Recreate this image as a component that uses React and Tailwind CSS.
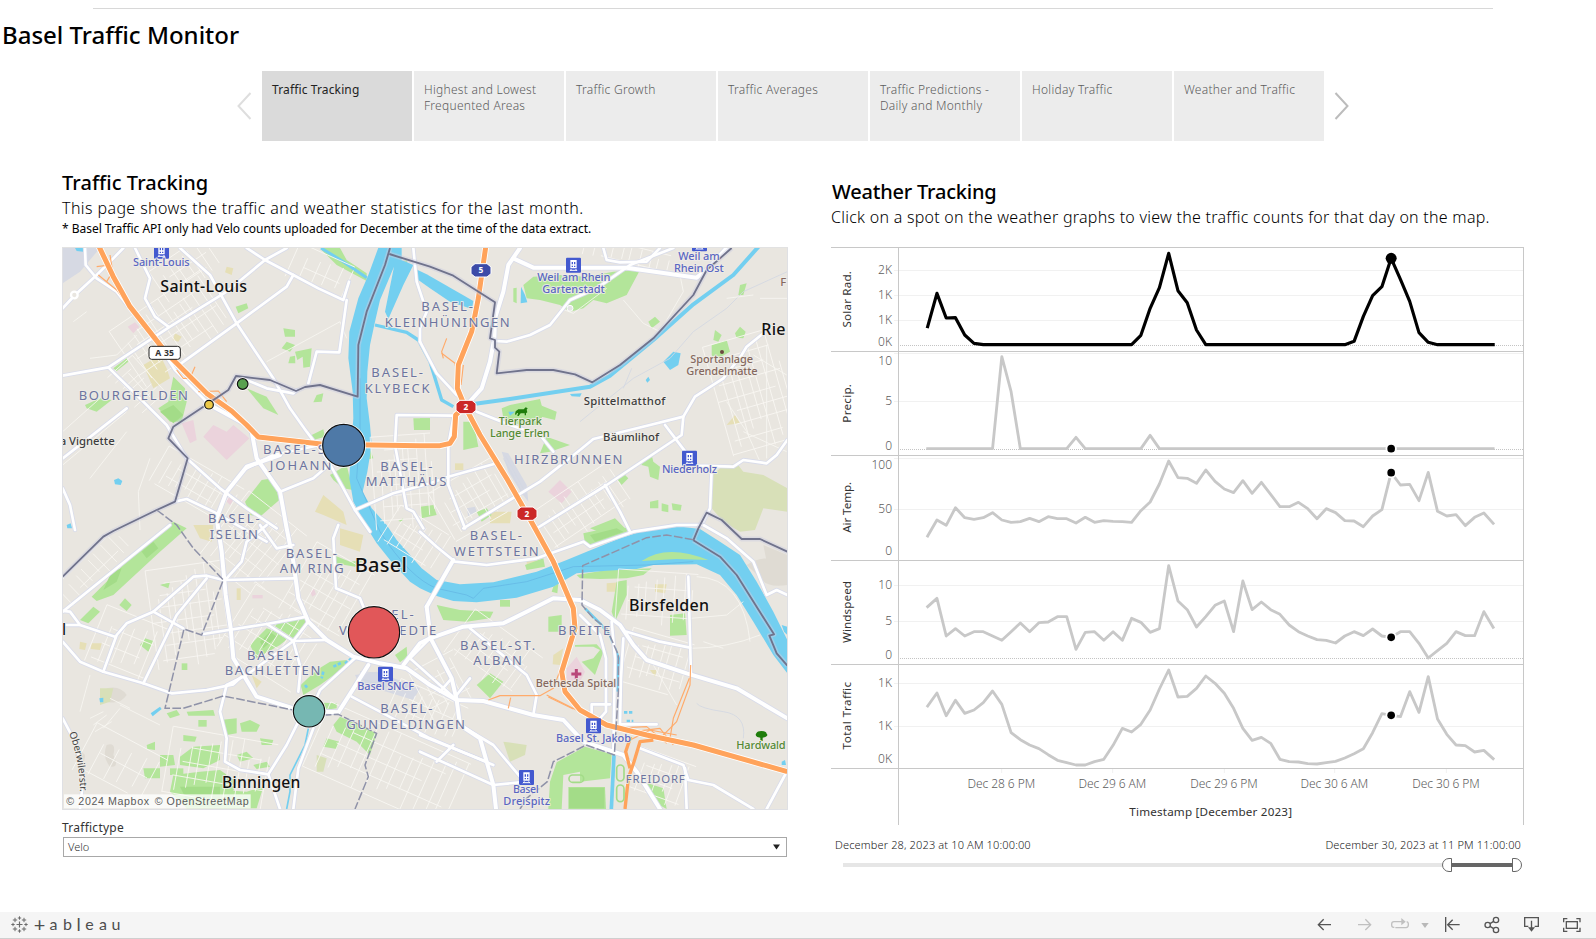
import React from "react";

const TABS = [
  "Traffic Tracking",
  "Highest and Lowest Frequented Areas",
  "Traffic Growth",
  "Traffic Averages",
  "Traffic Predictions - Daily and Monthly",
  "Holiday Traffic",
  "Weather and Traffic",
];

/* ---------- map data (units: a third of a pixel) ---------- */

const MAJOR = [
  "8 190 45 150 110 90 160 40 190 9",
  "75 9 77 60 110 100 170 140 240 230 290 290 345 375 450 480",
  "225 9 270 100 255 160 285 215 325 245",
  "8 392 145 367 330 245 500 140 615 45 680 9",
  "145 367 240 460 320 540 380 640 480 730 560 790 650 850",
  "360 9 450 90 530 235 640 400 690 490 740 560 800 640 850 730 885 795 930 860",
  "560 9 615 45 700 90 775 130 850 165 867 110",
  "860 165 838 322 770 320 745 415",
  "700 90 680 125 530 235 350 365",
  "8 640 200 490",
  "548 400 620 430 700 445 710 436",
  "8 730 30 780 45 855",
  "345 770 380 762 460 800 620 890",
  "885 795 1000 745 1110 715 1165 695",
  "1180 512 1010 510 1005 600 1040 790 1060 800 1090 850",
  "560 670 640 630 780 600",
  "660 740 760 700 830 640",
  "8 1100 330 840",
  "8 1190 60 1250 130 1280 250 1315 335 1345 440 1335 520 1318 550 1290",
  "130 1280 170 1170 200 1135 280 1100 400 995 440 992 490 1005 700 1000",
  "440 1000 350 1110 250 1315",
  "8 1098 30 1100 60 1140 165 1175",
  "8 1140 60 1140",
  "280 1100 370 1150",
  "430 1167 620 1137 740 1115",
  "620 1137 700 1188 800 1185",
  "700 1188 745 1130",
  "700 1188 722 1270 715 1340",
  "500 1320 560 1290 700 1188",
  "500 1320 480 1400 500 1480 495 1550 540 1575 625 1588 680 1500 715 1430",
  "625 1588 660 1692",
  "700 1692 715 1570 760 1450",
  "885 1240 780 1335 760 1380",
  "875 1355 960 1400 1110 1480 1300 1560",
  "835 840 820 880 828 1030 900 1060 912 1090",
  "500 1000 545 950 560 890 620 840",
  "600 840 650 910 700 900",
  "8 1420 50 1500 70 1600 60 1692",
  "1305 288 1340 290 1410 270 1470 240 1530 165 1610 130 1710 60 1840 9",
  "1630 9 1640 45 1680 52 1760 50 1800 9",
  "1080 290 1130 385 1190 450",
  "1060 9 1070 110 1100 200 1080 250 1080 290",
  "1250 500 1350 540 1440 570 1480 620",
  "1210 850 1440 710 1560 615 1600 582 1770 540 1870 515 1905 455 1990 400 2045 330 2060 305 2110 265",
  "1430 850 1640 720 1865 570 1870 515",
  "1815 540 1880 625 1910 662 2020 665 2050 645 2120 655 2150 630 2182 585",
  "1955 670 1950 790 1930 830",
  "1635 720 1680 800 1710 860",
  "1180 520 1165 600 1165 720 1215 850",
  "1165 695 1310 655",
  "1080 860 1130 905 1185 950 1280 960 1430 940 1570 890 1590 905 1720 860 1850 840 1930 840 2000 880 2080 950 2120 1050 2150 1035 2182 1050",
  "1700 1160 1800 1190 1890 1208",
  "1885 995 1893 1290",
  "1230 1150 1400 1290 1430 1350 1420 1410",
  "1080 1470 1280 1550",
  "1080 1520 1300 1620 1400 1610",
  "1200 1440 1300 1500 1380 1595",
  "1560 1110 1620 1170 1638 1240 1638 1400 1620 1420",
  "1655 1130 1665 1240 1660 1520",
  "1690 1180 1683 1300 1680 1438 1790 1438",
  "1740 1510 1870 1560 1885 1605 1960 1620 2080 1692",
  "1875 1570 1880 1692",
  "2120 1692 2175 1590",
  "1140 1340 1175 1300",
  "1190 1350 1230 1300",
  "1190 1365 1050 1240 1110 1180",
  "1595 1420 1595 1378 1650 1378",
  "1180 1500 1130 1550",
];

const WIDE = [
  "450 480 560 540 575 560 590 640 660 740 680 850 690 900 700 950 715 1060 745 1130 800 1185 880 1235 960 1255 1040 1270 1110 1320 1190 1365 1270 1368 1420 1410 1510 1425 1570 1490 1690 1530 1730 1580 1800 1692",
  "660 630 560 665 500 740 470 820 485 920 497 1050 512 1150 520 1240 590 1355 700 1390 800 1400 835 1402 925 1260",
  "1380 9 1345 60 1330 140 1305 220 1303 280 1290 350 1265 430 1220 480",
  "1360 40 1420 68 1700 68 1910 98 1945 70 2000 9",
  "1100 1085 1180 945",
  "1030 1260 1080 1195 1110 1180 1210 1145 1330 1135 1400 1100 1480 1060 1560 1065 1620 1095 1680 1140 1720 1200 1760 1245 1880 1285 2030 1330 2182 1420",
  "1100 1085 1112 1180 1175 1300 1190 1365 1200 1440 1260 1480 1300 1620 1308 1692",
];

const MOTORWAYS = [
  "115 0 160 95 210 185 320 325 440 445 515 498 560 540 595 576 790 598 1080 602 1140 602 1170 595 1183 575 1187 510 1215 485",
  "1278 0 1255 160 1235 260 1195 360 1192 430 1215 485 1260 570 1340 700 1400 805 1425 850 1480 950 1540 1090 1545 1150 1505 1280 1515 1340 1560 1395 1640 1440 1760 1470 1900 1500 2182 1580",
];
const RAMPS_WIDE = ["1780 1485 1740 1490 1722 1550 1705 1600 1695 1692", "1712 1475 1697 1520 1710 1570"];
const RAMPS = [
  "115 90 170 135 240 230", "150 30 158 80 140 110", "110 65 150 60",
  "350 375 370 400 390 400 405 365", "415 440 475 438 500 470",
  "1150 340 1145 320 1160 280", "1145 325 1185 355 1190 380", "1210 360 1203 420",
  "1285 1365 1320 1352 1440 1352 1480 1330 1510 1250", "1460 1350 1560 1400", "1465 1356 1540 1392",
  "1892 1260 1890 1320 1850 1430 1800 1480", "1888 1300 1840 1420 1830 1480", "1345 1390 1352 1358",
  "1650 1450 1760 1445 1820 1495", "1700 1490 1770 1455 1850 1470", "1720 1460 1800 1450 1840 1500",
];

const BORDERS = [
  "990 9 975 60 920 200 895 300 893 455 780 420 735 426 708 438 630 405 528 393 505 435 430 485 340 545 325 580 383 640 345 770 290 795 160 858 130 875 8 995",
  "988 27 1110 65 1180 92 1305 172 1290 280 1305 285 1305 308 1318 320 1310 385 1400 375 1480 375 1545 388 1597 412 1680 360 1780 280 1900 150 1940 75 2015 9",
  "1900 886 1915 850 1940 803 1985 825 2045 882 2100 882 2182 920",
  "1900 886 1980 935 2030 990 2142 1168 2128 1172 2150 1225 2182 1262",
];
const DASHED = [
  "1900 884 1820 870 1760 878 1568 962 1566 1080 1600 1120 1640 1150 1675 1230 1675 1340 1663 1530 1578 1500 1540 1520 1480 1550 1462 1610 1400 1660 1380 1692",
  "290 795 350 840 400 910 490 1005 425 1170 372 1152 315 1390 370 1390 490 1353 700 1395 800 1410 835 1408 950 1465 915 1560 925 1595 885 1692",
];

const PARKS = [
  "340 395 375 430 380 470 365 530 330 530 295 490 325 470",
  "560 430 620 455 655 510 610 490", "555 770 605 705 640 700 658 765 600 815 570 810",
  "160 370 200 340 205 350 170 378", "670 250 705 255 705 275 675 275", "680 290 705 300 690 320 665 310",
  "705 320 755 310 750 365 730 368 728 335 712 345", "690 335 705 332 706 355 685 355",
  "527 185 560 175 565 190 535 205", "75 480 120 460 155 465 110 500 80 490",
  "755 570 790 553 795 575 760 585", "810 690 860 660 878 735 850 730 820 705", "910 620 930 610 940 640 915 645",
  "1060 520 1110 520 1110 555 1062 555", "1020 50 1040 45 1045 62 1025 65",
  "1030 820 1025 830 1015 828", "770 450 790 445 785 470 760 472",
  "1390 120 1420 95 1500 90 1580 95 1660 80 1740 75 1700 150 1640 175 1600 165 1570 190 1530 200 1500 180 1440 165 1400 160",
  "1360 130 1370 128 1370 175 1360 170", "1765 230 1785 215 1800 230 1775 250",
  "2025 265 2040 245 2057 260 2050 280 2030 278", "1965 255 1985 270 1975 290 1960 285", "1955 300 2000 285 2010 320 1965 345 1955 330",
  "2040 120 2060 115 2050 150 2035 150", "1325 490 1350 480 1440 462 1450 500 1440 540 1380 540 1330 520",
  "1440 480 1490 500 1485 525 1445 515", "1460 575 1530 600 1470 620 1440 625",
  "1210 530 1240 530 1255 605 1210 615", "1080 520 1110 520 1108 553 1080 553",
  "1250 800 1280 790 1295 810 1265 830", "1080 785 1120 780 1130 810 1085 820", "1590 850 1665 820 1700 855 1640 870",
  "1745 645 1775 630 1780 650 1800 665 1795 705 1770 695 1765 665 1745 660", "1770 770 1795 765 1795 790 1770 790",
  "1805 775 1825 780 1825 802 1805 798", "1835 775 1865 780 1862 797 1838 795", "1670 700 1690 685 1705 700 1685 720",
  "95 1055 210 940 280 880 340 830 380 850 300 920 160 1050 110 1068",
  "60 1125 100 1085 120 1100 85 1135", "178 1080 195 1060 215 1080 200 1098", "240 1200 255 1180 280 1188 265 1220",
  "640 1140 735 1115 745 1130 700 1180", "570 1200 620 1150 690 1175 660 1200 590 1240 580 1220",
  "722 1320 770 1275 810 1250 860 1245 850 1270 780 1320 730 1350", "790 1373 830 1375 830 1390 795 1395",
  "840 1415 950 1465 930 1530 890 1490 830 1460 820 1440", "820 930 870 950 910 945 885 965 825 955",
  "1005 1230 1040 1205 1042 1235 1020 1252", "480 1425 530 1420 530 1465 500 1470",
  "540 1435 570 1425 600 1440 590 1460 545 1460", "320 1405 350 1395 360 1410 330 1420", "380 1400 460 1395 465 1412 385 1412",
  "260 1500 285 1490 285 1515 262 1512", "360 1535 400 1505 480 1500 480 1545 430 1570 360 1560",
  "300 1530 340 1530 345 1560 300 1565", "250 1570 300 1570 300 1600 255 1600",
  "340 1590 420 1580 480 1575 530 1610 500 1690 380 1690 330 1640", "330 1570 370 1570 370 1590 330 1590",
  "490 1635 560 1640 610 1625 590 1690 500 1690", "415 1425 440 1425 440 1445 415 1445",
  "530 1530 560 1520 580 1540 540 1550", "600 1480 640 1485 635 1500 605 1500", "580 1560 620 1550 630 1565 590 1572",
  "800 1480 838 1490 830 1512 790 1505", "365 1255 382 1255 382 1275 365 1275", "370 1470 410 1475 405 1490 370 1488",
  "1570 865 1640 850 1700 848 1705 862 1600 905 1575 895", "1760 945 1820 905 1900 915 1940 945",
  "1130 1080 1200 1095 1300 1100 1290 1120 1220 1130 1150 1125", "1320 1065 1350 1065 1350 1085 1320 1085",
  "1550 990 1640 975 1775 970 1750 990 1700 1000 1620 1002 1560 1000", "1670 1010 1700 1005 1700 1050 1665 1130 1655 1100",
  "1830 1110 1875 1105 1880 1170 1830 1172", "1465 1115 1505 1110 1505 1160 1465 1160",
  "1250 1320 1290 1285 1330 1310 1290 1360", "1565 1250 1600 1240 1620 1215 1600 1205 1545 1205 1545 1200 1610 1198 1630 1220 1605 1290",
  "1490 1552 1575 1505 1655 1528 1650 1600 1560 1610 1560 1580 1510 1590 1505 1692 1465 1692 1470 1610",
  "1525 1626 1635 1626 1638 1692 1525 1692", "1750 1610 1810 1630 1820 1692 1780 1670",
  "1395 960 1450 940 1455 965 1400 975", "1480 1025 1495 1015 1492 1045 1475 1040", "300 1020 330 1010 325 1030",
];
const GREY_GREEN = [
  "1985 665 2030 655 2050 680 2110 690 2182 730 2182 800 2110 790 2085 855 2040 860 1990 830 1955 790 1958 690",
  "1330 1490 1400 1500 1395 1530 1350 1550", "770 1530 800 1540 790 1580 770 1580", "120 1330 160 1330 150 1370 120 1380",
];
const SAND = [
  "250 360 300 330 320 370 330 400 280 430", "345 265 365 275 355 290 338 285", "500 65 520 70 515 90 495 82",
  "765 800 790 750 850 800 860 840 790 810", "1185 655 1210 655 1210 675 1185 675", "1290 800 1355 800 1350 835 1290 835",
  "400 840 460 840 455 890 420 880", "840 850 910 870 900 920 840 900", "530 1030 542 1030 542 1065 530 1065",
  "60 1190 80 1195 75 1215 58 1212", "95 1195 125 1195 120 1215 92 1212", "575 1290 605 1310 590 1330",
  "2000 540 2025 510 2040 535", "1480 1230 1510 1210 1500 1260 1478 1258", "1785 1018 1820 1018 1815 1045 1785 1040",
  "1640 1015 1700 1010 1690 1040 1640 1040", "1400 945 1440 945 1435 965 1400 965", "1770 1275 1790 1275 1785 1295",
  "1578 1560 1612 1550 1610 1585 1580 1585",
];
const PINK = [
  "365 535 400 525 410 585 390 595", "430 575 460 540 500 560 520 540 568 580 500 645", "203 245 225 232 238 245 220 265",
  "490 760 505 745 525 760 510 780", "1465 740 1500 705 1535 740 1505 775", "750 1040 762 1032 768 1048 757 1055",
  "577 1050 608 1050 608 1060 577 1060", "1520 1270 1550 1235 1575 1280 1560 1310 1520 1310",
];
const PALE = [
  "8 9 120 9 60 80 8 115", "1325 620 1345 625 1400 720 1405 770 1385 745 1345 680",
  "885 1290 950 1280 1080 1330 1060 1365 980 1340 900 1320", "1220 790 1245 785 1250 800 1225 815",
];
const PONDS = [
  "162 705 175 700 187 708 182 720 165 718", "1383 125 1395 150 1402 172 1382 175", "1810 350 1840 320 1862 325 1855 360 1830 375",
  "272 1405 300 1385 305 1392 278 1414", "1345 500 1365 500 1350 512", "1530 447 1565 445 1560 455 1535 454",
  "1757 405 1765 395 1770 405 1762 413", "2165 1550 2175 1545 2178 1560 2165 1560", "2165 1140 2182 1145 2182 1170 2172 1160",
  "45 9 72 9 70 20 50 18", "20 840 32 835 36 850 22 850", "118 1360 130 1358 130 1372 120 1372",
];

const GRIDS = [
  { x: 340, y: 250, w: 330, h: 200, a: -34, s: 24 },
  { x: 380, y: 70, w: 200, h: 110, a: -34, s: 26 },
  { x: 780, y: 80, w: 180, h: 110, a: 24, s: 36 },
  { x: 230, y: 420, w: 150, h: 100, a: 48, s: 24 },
  { x: 580, y: 900, w: 220, h: 240, a: 38, s: 25 },
  { x: 410, y: 720, w: 260, h: 120, a: 30, s: 25 },
  { x: 390, y: 1110, w: 230, h: 300, a: -8, s: 24 },
  { x: 640, y: 1180, w: 260, h: 220, a: 32, s: 27 },
  { x: 200, y: 1200, w: 200, h: 180, a: 22, s: 34 },
  { x: 800, y: 1040, w: 200, h: 230, a: 30, s: 26 },
  { x: 980, y: 1560, w: 460, h: 210, a: 24, s: 32 },
  { x: 1100, y: 1400, w: 220, h: 120, a: 24, s: 26 },
  { x: 1030, y: 710, w: 180, h: 280, a: -4, s: 22 },
  { x: 1240, y: 760, w: 220, h: 160, a: -30, s: 25 },
  { x: 1060, y: 880, w: 170, h: 130, a: 32, s: 24 },
  { x: 1560, y: 790, w: 300, h: 140, a: -34, s: 26 },
  { x: 2080, y: 440, w: 220, h: 340, a: -16, s: 26 },
  { x: 1300, y: 1230, w: 250, h: 160, a: 36, s: 28 },
  { x: 1790, y: 1060, w: 240, h: 160, a: 4, s: 28 },
  { x: 1790, y: 1250, w: 190, h: 160, a: 16, s: 25 },
  { x: 1800, y: 1600, w: 180, h: 140, a: 20, s: 26 },
  { x: 480, y: 1570, w: 320, h: 200, a: 10, s: 30 },
  { x: 180, y: 1560, w: 240, h: 160, a: 28, s: 44 },
  { x: 1150, y: 1320, w: 150, h: 160, a: -28, s: 26 },
  { x: 1700, y: 30, w: 260, h: 60, a: 14, s: 28 },
  { x: 100, y: 970, w: 240, h: 80, a: -44, s: 30 },
];

const CITY = "fill-[#111111] font-medium";
const DISTRICT = "fill-[#6c749f]";
const STATION = "fill-[#5a67c2] font-medium";
const HAMLET = "fill-[#3d3d3d] font-medium";
const BROWN = "fill-[#85695f] font-medium";
const GREEN = "fill-[#548a35] font-medium";

// [text, left, right, baseline, size, colour class]
const LABELS = [
  ["Saint-Louis", 220, 390, 66, 33, STATION],
  ["Saint-Louis", 302, 562, 143, 48, CITY],
  ["BOURGFELDEN", 57, 385, 468, 39, DISTRICT],
  ["a Vignette", 0, 165, 603, 34, HAMLET],
  ["BASEL-ST.", 610, 838, 630, 39, DISTRICT],
  ["JOHANN", 630, 815, 678, 39, DISTRICT],
  ["BASEL-", 445, 600, 837, 39, DISTRICT],
  ["ISELIN", 450, 595, 884, 39, DISTRICT],
  ["BASEL-", 935, 1090, 398, 39, DISTRICT],
  ["KLYBECK", 915, 1110, 446, 39, DISTRICT],
  ["BASEL-", 1085, 1240, 201, 39, DISTRICT],
  ["KLEINHÜNINGEN", 975, 1350, 248, 39, DISTRICT],
  ["BASEL-", 962, 1118, 680, 39, DISTRICT],
  ["MATTHÄUS", 918, 1160, 726, 39, DISTRICT],
  ["Weil am Rhein", 1433, 1652, 110, 33, STATION],
  ["Gartenstadt", 1448, 1635, 146, 33, STATION],
  ["Weil am", 1856, 1980, 47, 33, STATION],
  ["Rhein Ost", 1843, 1992, 83, 33, STATION],
  ["F", 2162, 2180, 125, 34, BROWN],
  ["Rie", 2105, 2177, 272, 48, CITY],
  ["Sportanlage", 1892, 2080, 355, 33, BROWN],
  ["Grendelmatte", 1880, 2094, 391, 33, BROWN],
  ["Spittelmatthof", 1572, 1817, 481, 34, HAMLET],
  ["Bäumlihof", 1630, 1798, 591, 34, HAMLET],
  ["Tierpark", 1317, 1447, 541, 33, GREEN],
  ["Lange Erlen", 1291, 1470, 577, 33, GREEN],
  ["HIRZBRUNNEN", 1363, 1688, 660, 39, DISTRICT],
  ["Niederholz", 1807, 1972, 687, 33, STATION],
  ["BASEL-", 678, 832, 940, 39, DISTRICT],
  ["AM RING", 660, 852, 987, 39, DISTRICT],
  ["Basel", 885, 1042, 983, 60, CITY],
  ["BASEL-", 905, 1062, 1124, 39, DISTRICT],
  ["VORSTAEDTE", 838, 1130, 1172, 39, DISTRICT],
  ["BASEL-", 562, 715, 1246, 39, DISTRICT],
  ["BACHLETTEN", 495, 782, 1292, 39, DISTRICT],
  ["Basel SNCF", 893, 1063, 1336, 33, STATION],
  ["BASEL-", 962, 1118, 1407, 39, DISTRICT],
  ["GUNDELDINGEN", 860, 1216, 1453, 39, DISTRICT],
  ["Binningen", 487, 722, 1631, 47, CITY],
  ["l", 8, 19, 1173, 48, CITY],
  ["BASEL-", 1230, 1387, 888, 39, DISTRICT],
  ["WETTSTEIN", 1182, 1437, 934, 39, DISTRICT],
  ["Birsfelden", 1708, 1948, 1101, 48, CITY],
  ["BREITE", 1495, 1652, 1172, 39, DISTRICT],
  ["BASEL-ST.", 1201, 1427, 1216, 39, DISTRICT],
  ["ALBAN", 1241, 1387, 1263, 39, DISTRICT],
  ["Bethesda Spital", 1428, 1670, 1329, 33, BROWN],
  ["Basel St. Jakob", 1489, 1714, 1494, 33, STATION],
  ["Hardwald", 2030, 2178, 1515, 33, GREEN],
  ["FREIDORF", 1698, 1875, 1617, 34, DISTRICT],
  ["Basel", 1360, 1437, 1647, 33, STATION],
  ["Dreispitz", 1331, 1471, 1683, 33, STATION],
];

const STATIONS = [[282, -4], [1518, 38], [1896, -26], [1866, 617], [954, 1265], [1578, 1420], [1377, 1575]];

const BUBBLES = [
  [548, 417, 18, "fill-[#59a14f]"],
  [447, 479, 15, "fill-[#edc948]"],
  [851, 601, 65, "fill-[#4e79a7]"],
  [942, 1162, 79, "fill-[#e15759]"],
  [747, 1399, 49, "fill-[#76b7b2]"],
];

function StreetGrid({ x, y, w, h, a, s }) {
  let d = "";
  for (let i = 0; i * s <= w; i++) {
    const px = -w / 2 + i * s + ((i * 7) % 5) * 2;
    const cut = ((i * 13) % 7) * h * 0.05;
    d += `M${px} ${-h / 2 + cut}V${h / 2 - (((i * 11) % 5) * h) / 16}`;
  }
  for (let j = 0; j * s * 1.6 <= h; j++) {
    const py = -h / 2 + j * s * 1.6 + ((j * 5) % 3) * 3;
    d += `M${-w / 2 + (((j * 3) % 4) * w) / 14} ${py}H${w / 2 - (((j * 7) % 5) * w) / 16}`;
  }
  return <path d={d} transform={`translate(${x} ${y}) rotate(${a})`} />;
}

const lines = (list) => list.map((p, i) => <polyline key={i} points={p} />);
const areas = (list) => list.map((p, i) => <polygon key={i} points={p} />);

function Shield({ x, y, label, className }) {
  return (
    <g>
      <path d={`M${x - 18} ${y - 20}H${x + 18}L${x + 30} ${y - 10}V${y + 10}L${x + 18} ${y + 20}H${x - 18}L${x - 30} ${y + 10}V${y - 10}Z`} className={className} strokeWidth="3" stroke="#fff" />
      <text x={x} y={y + 9} textAnchor="middle" fontSize="25" className="fill-white font-bold">{label}</text>
    </g>
  );
}

function BaselMap() {
  return (
    <svg viewBox="6 6 2178 1689" className="mt-[11px] block h-[563px] w-[726px] font-['Noto_Sans',sans-serif]">
      <rect x="6" y="6" width="2178" height="1689" fill="#e9e6e0" />
      <g fill="#dfdbd3">
        <path d="M140 1500q30-10 20 30q20 40-10 35q-25-30-10-65zM45 1530q15-20 30 0q0 30-20 30zM140 1330q40-10 60 20q-20 30-60 20z" />
        <path d="M2060 960q60-40 122 0v60q-60 10-80-20zM2110 900l72 30v50l-60-20z" />
      </g>
      <g fill="#d6d9e3">{areas(PALE)}</g>
      <g fill="#d8e0b8">{areas(GREY_GREEN)}</g>
      <g fill="#e6dfb6">{areas(SAND)}</g>
      <g fill="#ebd3dc">{areas(PINK)}</g>
      <g fill="#b3e59a">{areas(PARKS)}</g>
      <g fill="#a3dc88">
        <path d="M130 1035l25-55l30-10l-15 40zM245 920l35-30l15 20l-35 30zM600 1190l30-30l20 15l-40 35zM300 500l40-20l30 30l-30 25zM360 1625h120v60h-90zM1527 1628h106v62h-106zM1590 870l80-20l20 10l-85 30z" />
      </g>
      <path d="M785 15L830 60L920 108V85L860 45L840 9H790Z" fill="#b3e59a" />
      <g fill="#73cff0">
        {areas(PONDS)}
        <path d="M958 0L925 90L895 160L868 260L865 340L878 440L880 520L872 620L868 700L880 770L925 855L950 895L990 945L1050 1010L1080 1030L1130 1053L1180 1068L1250 1072L1370 1058L1480 1025L1550 985L1640 977L1730 972L1780 960L1910 958L1980 990L2030 1050L2080 1130L2140 1230L2182 1285V1185L2140 1100L2090 1010L2040 930L1980 890L1920 852L1840 842L1780 848L1680 880L1580 920L1520 945L1430 980L1300 1012L1200 1018L1130 1005L1085 970L1050 930L1010 885L980 840L935 790L908 740L922 680L935 600L930 540L920 460L922 380L930 300L945 230L960 165L1002 65L975 200L985 222L1030 120L1060 60L1025 45V0Z" />
        <path d="M1062 70L1100 88L1240 168L1236 192L1170 170L1110 130L1075 105Z" />
      </g>
      <path d="M1745 948Q1820 895 1945 945L1850 942Z" fill="#b3e59a" />
      <g fill="none" stroke="#73cff0" strokeLinejoin="round">
        <polyline points="945 240 1040 262 1075 285 1110 350 1145 465 1180 485" strokeWidth="10" />
        <polyline points="1240 477 1350 462 1590 425 1650 392 1780 285 1900 178 2020 90 2100 0" strokeWidth="12" />
        <polyline points="1654 1692 1662 1530" strokeWidth="11" />
        <polyline points="745 1450 735 1500 690 1590 690 1640 680 1692" strokeWidth="5" />
        <polyline points="783 9 850 50 920 98" strokeWidth="9" />
        <polyline points="1575 1090 1620 1135 1650 1170 1676 1240 1672 1340" strokeWidth="8" />
        <path d="M735 1320l8 10M790 1280l-5 20M820 1265l25 -12M855 1255l20-15M1692 1402h30M1700 1428h20" strokeWidth="8" strokeDasharray="10 5" />
      </g>
      <g fill="none" stroke="#62b4e2" strokeWidth="2">
        <path d="M900 400V560L890 700L960 860Q1050 1000 1130 1030L1220 1050L1240 1060L1270 1030L1400 1010L1540 965L1760 960L1900 950" />
      </g>
      <g fill="none" stroke="#d3d7e2" strokeWidth="2.5">
        <path d="M1560 530L1720 400L1830 340L1900 260L2000 190L2050 140L2182 80M1690 430L1715 370M1910 1375Q1920 1390 1990 1400T2050 1480" />
        <path d="M900 1300l100 30M905 1310l120 10M1330 640l60 110M1338 635l60 110M900 1280l60 5" />
      </g>
      <g fill="none" stroke="#f8f6f2" strokeWidth="2.5">
        {GRIDS.map((g, i) => <StreetGrid key={i} {...g} />)}
        <path d="M270 640L235 740L240 855M8 660L200 500M620 350L840 230L860 280M1500 190L1540 205L1640 130M1690 165L1750 235L1800 260L1870 140L1860 90M1910 995Q2050 1000 2070 1190M1893 1120L2000 1110L2050 1070M1893 1210Q2000 1210 2100 1170M120 460L8 560M90 1290L60 1400M180 1380L300 1440M130 1450L180 1390M1930 1190L1990 1210M40 230L80 200M90 340L170 330L230 270M1780 1260L1850 1380M200 560L90 700" />
        <path d="M90 1420l40 -20M100 1440l40-30M105 1460l50-30M150 1360l60 30M2000 160l80-10M2100 160h82M2050 560l130 60M2000 470l60 90l40 90M2120 300v340M2080 330l100 60" />
      </g>
      <g fill="none" stroke="#d9dcea" strokeWidth="13" strokeLinejoin="round" strokeLinecap="round">{lines(MAJOR)}</g>
      <g fill="none" stroke="#d9dcea" strokeWidth="17" strokeLinejoin="round" strokeLinecap="round">{lines(WIDE)}</g>
      <g fill="none" stroke="#fff" strokeWidth="8" strokeLinejoin="round" strokeLinecap="round">{lines(MAJOR)}</g>
      <g fill="none" stroke="#fff" strokeWidth="12" strokeLinejoin="round" strokeLinecap="round">{lines(WIDE)}</g>
      <circle cx="43" cy="150" r="10" fill="#e9e6e0" stroke="#fff" strokeWidth="7" />
      <circle cx="1530" cy="190" r="9" fill="#e4e4e4" stroke="#fff" strokeWidth="3" />
      <g fill="none" stroke="#ffab6b" strokeWidth="3.5" strokeLinejoin="round">{lines(RAMPS)}</g>
      <g fill="none" stroke="#fff" strokeWidth="20" strokeLinejoin="round">{lines(MOTORWAYS)}</g>
      <g fill="none" stroke="#ffa35b" strokeWidth="10" strokeLinejoin="round">{lines(RAMPS_WIDE)}</g>
      <g fill="none" stroke="#ffa35b" strokeWidth="15" strokeLinejoin="round">{lines(MOTORWAYS)}</g>
      <g fill="none" stroke="#c9cbe0" strokeOpacity=".45" strokeWidth="15" strokeLinejoin="round">{lines(BORDERS)}</g>
      <g fill="none" stroke="#70738c" strokeWidth="5.5" strokeLinejoin="round">{lines(BORDERS)}</g>
      <g fill="none" stroke="#8f92a8" strokeWidth="4.5" strokeDasharray="26 7" strokeLinejoin="round">{lines(DASHED)}</g>
      <g fill="none" stroke="#a3dc88" strokeWidth="5">
        <rect x="1527" y="1590" width="44" height="22" rx="11" />
        <rect x="1670" y="1560" width="22" height="48" rx="11" />
        <rect x="1670" y="1620" width="22" height="50" rx="11" />
      </g>
      {STATIONS.map(([x, y], i) => (
        <g key={i} transform={`translate(${x} ${y})`}>
          <rect width="45" height="45" rx="3" fill="#4359cf" />
          <path d="M13 7H32V32H13ZM17 13V20H21V13ZM24 13V20H28V13ZM17 24V28H21V24ZM24 24V28H28V24Z" fill="#fff" fillRule="evenodd" />
          <path d="M12 40L16 34M33 40L29 34M14 38H31" stroke="#fff" strokeWidth="3" />
        </g>
      ))}
      <circle cx="1986" cy="321" r="6" fill="#6b4a40" />
      <path d="M1549 1272V1302M1534 1287H1564" stroke="#b9487a" strokeWidth="9" fill="none" />
      <path d="M1367 499l8-6h16l6-6l6 3l-3 4l2 8l-4 3v6h-4v-6h-12l-6 8h-4l2-9l-3 0l-3 6l-3-2z" fill="#1f7d0c" />
      <path d="M2104 1458q14 0 16 8q6 6-4 10l-8 2v10h-7v-10l-9-2q-8-6-3-11q3-7 15-7z" fill="#1f7d0c" />
      <rect x="267" y="304" width="94" height="39" rx="8" fill="#fff" stroke="#222" strokeWidth="3" />
      <text x="314" y="332" textAnchor="middle" fontSize="26" textLength="56" className="fill-[#333] font-bold">A 35</text>
      <Shield x={1263} y={76} label="5" className="fill-[#3c4ba8]" />
      <Shield x={1218} y={486} label="2" className="fill-[#cb2727]" />
      <Shield x={1401} y={806} label="2" className="fill-[#cb2727]" />
      <g stroke="#efede8" strokeOpacity=".85" strokeWidth="6" strokeLinejoin="round" paintOrder="stroke">
        {LABELS.map(([t, x1, x2, y, size, cls], i) => (
          <text key={i} x={x1 - 1} y={y - 2} fontSize={size} textLength={x2 - x1} lengthAdjust={t.length < 2 ? "spacingAndGlyphs" : "spacing"} className={cls}>{t}</text>
        ))}
        <path id="oberwil" d="M27 1464Q66 1560 60 1700" fill="none" stroke="none" />
        <text fontSize="30" className="fill-[#444]"><textPath href="#oberwil" textLength="180">Oberwilerstr.</textPath></text>
      </g>
      {BUBBLES.map(([x, y, r, cls], i) => (
        <g key={i}>
          <circle cx={x} cy={y} r={r + 2} fill="#fff" />
          <circle cx={x} cy={y} r={r - 2} stroke="#111" strokeWidth="3.5" className={cls} />
        </g>
      ))}
      <rect x="12" y="1648" width="560" height="42" fill="#fff" fillOpacity=".78" />
      <g fontSize="32" className="fill-[#5a5a5a] font-['Liberation_Sans',Arial,sans-serif]">
        <text x="19" y="1679" textLength="248">© 2024 Mapbox</text>
        <text x="284" y="1679" textLength="282">© OpenStreetMap</text>
      </g>
      <path d="M7.500 6V1693.500H2182.500V6" fill="none" stroke="#dfe0e4" strokeWidth="3" />
      <path d="M6 7.500H2184" stroke="#e2e2e2" strokeWidth="3" />
    </svg>
  );
}

/* ---------- weather charts ---------- */

const flat = (n, v) => Array(n).fill(v);
const SOLAR = [260, 160, 234, 233, 285, 310, ...flat(17, 314), 286, 205, 143, 40, 152, 188, 270, ...flat(16, 314), 304, 229, 167, 140, 55, 118, 184, 278, 307, ...flat(7, 314)];
const PRECIP = flat(62, 626);
PRECIP[8] = 350; PRECIP[9] = 455; PRECIP[16] = 592; PRECIP[24] = 586;
const AIR = [888, 840, 856, 803, 833, 838, 833, 818, 840, 847, 845, 835, 845, 830, 836, 836, 849, 832, 847, 842, 844, 845, 847, 812, 786, 732, 663, 713, 715, 730, 690, 724, 747, 758, 722, 760, 727, 763, 800, 800, 787, 806, 836, 806, 818, 842, 843, 860, 828, 809, 698, 735, 733, 782, 697, 814, 828, 824, 857, 832, 819, 850];
const WIND = [215, 190, 303, 281, 303, 290, 290, 303, 316, 290, 264, 290, 263, 261, 245, 245, 343, 292, 290, 316, 290, 316, 250, 262, 292, 281, 92, 198, 224, 276, 245, 211, 198, 290, 138, 224, 201, 224, 238, 270, 290, 303, 314, 316, 324, 303, 290, 302, 282, 303, 307, 290, 290, 325, 369, 347, 325, 290, 302, 302, 230, 277].map((v) => v + 885);
const TRAFFIC = [513, 474, 542, 496, 535, 525, 503, 468, 508, 593, 614, 630, 641, 659, 676, 683, 690, 690, 680, 673, 631, 580, 591, 568, 525, 462, 405, 486, 484, 460, 423, 445, 475, 520, 580, 616, 607, 625, 673, 680, 681, 686, 687, 683, 679, 669, 656, 641, 593, 536, 541, 545, 470, 532, 425, 552, 598, 630, 632, 651, 646, 671].map((v) => v + 885);
const px = (i) => 323 + i * 27.81;
const SELECTED = 50;

const Y_TICKS = [
  ["2K", 102], ["1K", 177], ["1K", 252], ["0K", 318], ["10", 375], ["5", 495], ["0", 629],
  ["100", 687], ["50", 819], ["0", 945], ["10", 1047], ["5", 1155], ["0", 1257], ["1K", 1341], ["1K", 1470], ["0K", 1569],
];
const GRID_Y = [91.5, 166.5, 241.5, 340.5, 484.5, 655.5, 808.5, 1036.5, 1144.5, 1330.5, 1459.5];
const ZERO_Y = [316.5, 628.5, 1255.5];
const PANELS = [
  ["Solar Rad.", 178, 169], ["Precip.", 490, 116], ["Air Temp.", 802, 153], ["Windspeed", 1116, 186], ["Total Traffic", 1427, 203],
];
const X_TICKS = [["Dec 28 6 PM", 545], ["Dec 29 6 AM", 878], ["Dec 29 6 PM", 1213], ["Dec 30 6 AM", 1544], ["Dec 30 6 PM", 1879]];

function Series({ data, dark }) {
  const color = dark ? "#000" : "#c8c8c8";
  const y = data[SELECTED];
  return (
    <g>
      <polyline points={data.map((v, i) => `${px(i)},${v}`).join(" ")} fill="none" stroke={color} strokeWidth={dark ? 9.5 : 8.5} strokeLinejoin="round" strokeLinecap="square" />
      {!dark && <circle cx={px(SELECTED)} cy={y} r="17" fill="#fff" />}
      <circle cx={px(SELECTED)} cy={y} r={dark ? 16.5 : 11.5} />
    </g>
  );
}

function WeatherCharts() {
  return (
    <svg viewBox="30 18 2088 1740" className="mt-[17px] block h-[580px] w-[696px] font-['Noto_Sans',sans-serif]">
      <g stroke="#f1f1f1" strokeWidth="3">
        {GRID_Y.map((y) => <path key={y} d={`M222 ${y}H2109`} />)}
        {X_TICKS.map(([, x]) => <path key={x} d={`M${x} 1587V1599`} />)}
      </g>
      <g stroke="#c4c4c4" strokeWidth="3" strokeDasharray="3 3">
        {ZERO_Y.map((y) => <path key={y} d={`M240 ${y}H2109`} />)}
      </g>
      <Series data={SOLAR} dark />
      <Series data={PRECIP} />
      <Series data={AIR} />
      <Series data={WIND} />
      <Series data={TRAFFIC} />
      <g stroke="#c8c8c8" strokeWidth="3">
        {[22.5, 334.5, 646.5, 961.5, 1273.5, 1585.5].map((y) => <path key={y} d={`M33 ${y}H2112`} />)}
        <path d="M235.500 21V1755M2110.500 21V1755" />
      </g>
      <g fontSize="36" className="fill-[#5c5c5c] font-light">
        {Y_TICKS.map(([t, y], i) => <text key={i} x="216" y={y} textAnchor="end">{t}</text>)}
        {X_TICKS.map(([t, x]) => <text key={x} x={x - 1} y="1645" textAnchor="middle" textLength="203">{t}</text>)}
      </g>
      <g fontSize="35" className="fill-[#333]">
        {PANELS.map(([t, y, len]) => (
          <text key={t} transform={`translate(93 ${y}) rotate(-90)`} textAnchor="middle" textLength={len}>{t}</text>
        ))}
        <text x="928" y="1728" textLength="488">Timestamp [December 2023]</text>
      </g>
    </svg>
  );
}

/* ---------- toolbar ---------- */

function Tool({ x, w = 72, className = "", children }) {
  return (
    <svg viewBox={`${x} 219 ${w} 72`} className={`h-6 shrink-0 ${w === 72 ? "w-6" : "w-[14px]"} ${className}`} fill="none" stroke="currentColor" strokeWidth="4">
      {children}
    </svg>
  );
}

function TableauLogo() {
  const plus = (x, y, r) => `M${x - r} ${y}H${x + r}M${x} ${y - r}V${y + r}`;
  return (
    <svg viewBox="0 0 130 26" className="h-[26px] w-[130px]" aria-label="tableau">
      <g stroke="#6b6b6b" strokeWidth="1" fill="none">
        <path d={plus(19.5, 12.5, 3)} strokeWidth="1.200" />
        <path d={plus(19.5, 6, 1.7) + plus(19.5, 19, 1.7) + plus(13, 12.5, 1.7) + plus(26, 12.5, 1.7)} />
        <path d={plus(15, 8, 2.2) + plus(24, 8, 2.2) + plus(15, 17, 2.2) + plus(24, 17, 2.2)} />
      </g>
      <g fontSize="16" textAnchor="middle" className="fill-[#4d4d4d] font-['Lato',sans-serif]">
        <text x="39.500" y="19.500" fontSize="20">+</text>
        <text x="53.500" y="18">a</text>
        <text x="67.500" y="18">b</text>
        <text x="78.500" y="18.500" fontSize="18">l</text>
        <text x="89.500" y="18">e</text>
        <text x="103" y="18">a</text>
        <text x="116" y="18">u</text>
      </g>
    </svg>
  );
}

export default function App() {
  return (
    <div className="flex h-[939px] w-[1596px] flex-col overflow-hidden bg-white font-['Noto_Sans',sans-serif] text-black">
      <div className="mt-2 ml-[93px] h-px w-[1400px] shrink-0 bg-[#d8d8d8]" />
      <h1 className="mt-[10px] pl-[2px] text-[24px] leading-8 font-medium">Basel Traffic Monitor</h1>

      <nav className="mt-5 flex h-[70px] items-center pl-[236px]">
        <svg viewBox="0 0 16 28" className="h-7 w-4" fill="none" stroke="#dedede" strokeWidth="2"><path d="M14.500 1L2.500 14L14.500 27" /></svg>
        <div className="mx-[10px] flex h-full gap-[2px]">
          {TABS.map((t, i) => (
            <div key={t} className={`w-[150px] px-[10px] pt-[11px] text-[12px] leading-4 ${i === 0 ? "bg-[#dadada] tracking-[0.13px] text-[#222]" : "bg-[#ececec] font-light tracking-[0.28px] text-[#5c5c5c]"}`}>{t}</div>
          ))}
        </div>
        <svg viewBox="0 0 16 28" className="h-7 w-4" fill="none" stroke="#bcbcbc" strokeWidth="2"><path d="M1.500 1L13.500 14L1.500 27" /></svg>
      </nav>

      <main className="flex flex-1 pl-[62px]">
        <section className="w-[726px] pt-7">
          <h2 className="text-[20px] leading-7 font-medium tracking-[0.05px]">Traffic Tracking</h2>
          <p className="-mt-px text-[16px] leading-6 font-light tracking-[0.4px] whitespace-nowrap">This page shows the traffic and weather statistics for the last month.</p>
          <p className="mt-px -mb-px text-[12px] leading-4 tracking-[-0.02px] whitespace-nowrap">* Basel Traffic API only had Velo counts uploaded for December at the time of the data extract.</p>
          <BaselMap />
          <div className="mt-[10px] text-[12px] leading-4 tracking-[0.25px] text-[#333]">Traffictype</div>
          <div className="mt-px mr-px ml-px flex h-5 items-center justify-between border border-[#a8a8a8] pr-[6px] pl-1 text-[11px] leading-4 font-light text-[#333]">
            <span>Velo</span>
            <svg viewBox="0 0 7 6" className="h-[6px] w-[7px]"><path d="M0 0.500H7L3.500 5.500Z" fill="#222" /></svg>
          </div>
        </section>

        <section className="ml-[42px] w-[696px] pt-[37px]">
          <h2 className="pl-[2px] text-[20px] leading-7 font-medium tracking-[-0.2px]">Weather Tracking</h2>
          <p className="-mt-px pl-[1px] text-[16px] leading-6 font-light tracking-[0.265px] whitespace-nowrap">Click on a spot on the weather graphs to view the traffic counts for that day on the map.</p>
          <WeatherCharts />
          <div className="mt-[11px] flex justify-between pr-[5px] pl-[5px] text-[11px] leading-4 font-light tracking-[0.14px] text-[#222]">
            <span>December 28, 2023 at 10 AM 10:00:00</span>
            <span>December 30, 2023 at 11 PM 11:00:00</span>
          </div>
          <div className="mt-[5px] flex h-[14px] items-center pl-[13px]">
            <div className="h-1 w-[599px] bg-[#e6e6e6]" />
            <svg viewBox="0 0 10 14" className="h-[14px] w-[10px]"><path d="M9.500 .5H7A6.500 6.500 0 0 0 7 13.500H9.500Z" fill="#fff" stroke="#666" /></svg>
            <div className="h-1 w-[60px] bg-[#666]" />
            <svg viewBox="0 0 10 14" className="h-[14px] w-[10px]"><path d="M.5 .5H3A6.500 6.500 0 0 1 3 13.500H.5Z" fill="#fff" stroke="#666" /></svg>
          </div>
        </section>
      </main>

      <footer className="flex h-[27px] items-center justify-between border-b border-[#cfcfcf] bg-[#f5f5f5] pr-[13px] text-[#555]">
        <TableauLogo />
        <div className="flex items-center">
          <Tool x={96}><path d="M115 254H153M131 238L115 254L131 270" /></Tool>
          <Tool x={216} className="ml-4 text-[#c0c0c0]"><path d="M234 254H272M256 238L272 254L256 270" /></Tool>
          <Tool x={324} className="ml-3 text-[#c0c0c0]"><path d="M343 262H341Q335 262 335 255V252Q335 245 342 245H366M346 263H378Q385 262 385 255V251Q385 247 380 245" /><path d="M364 234L377 245L364 256Z" fill="currentColor" stroke="none" /></Tool>
          <Tool x={414} w={42} className="ml-[6px] text-[#b8b8b8]"><path d="M424 249H446L435 264Z" fill="currentColor" stroke="none" /></Tool>
          <Tool x={480} className="ml-2"><path d="M497 231V276M503 254H539M518 239L503 254L518 269" /></Tool>
          <Tool x={600} className="ml-4"><circle cx="648" cy="240" r="8" /><circle cx="623" cy="255" r="8" /><circle cx="648" cy="270" r="8" /><path d="M630 251L641 244M630 259L641 266" /></Tool>
          <Tool x={717} className="ml-[15px]"><path d="M745 259H734V233H775V259H764M754.500 242V264" /><path d="M744 262H765L754.500 275Z" fill="currentColor" stroke="none" /></Tool>
          <Tool x={837} className="ml-4"><rect x="859" y="245" width="33" height="20" /><path d="M851 247V236H862M889 236H900V247M900 263V274H889M862 274H851V263" /></Tool>
        </div>
      </footer>
    </div>
  );
}
